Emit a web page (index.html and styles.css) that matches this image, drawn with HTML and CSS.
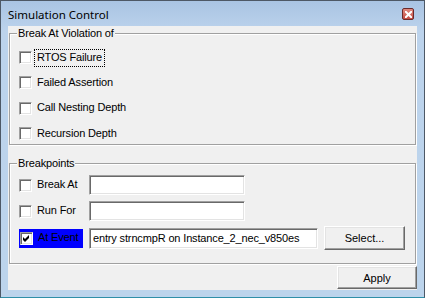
FILE: index.html
```html
<!DOCTYPE html>
<html lang="en">
<head>
  <meta charset="UTF-8" />
  <title>Simulation Control</title>
  <link rel="stylesheet" href="styles.css">
</head>
<body>
  <div class="window">
    <div class="titlebar">
      <span class="title">Simulation Control</span>
      <span class="close">
        <svg width="7" height="7" viewBox="0 0 7 7"><path d="M0 0 L7 7 M7 0 L0 7" stroke="#fff" stroke-width="2"/></svg>
      </span>
    </div>

    <div class="client">
      <div class="group group-violation">
        <div class="group-title">Break At Violation of</div>
        <div class="rows">
          <div class="row"><span class="check"></span><span class="label focused">RTOS Failure</span></div>
          <div class="row"><span class="check"></span><span class="label">Failed Assertion</span></div>
          <div class="row"><span class="check"></span><span class="label">Call Nesting Depth</span></div>
          <div class="row"><span class="check"></span><span class="label">Recursion Depth</span></div>
        </div>
      </div>

      <div class="group group-breakpoints">
        <div class="group-title">Breakpoints</div>
        <div class="rows">
          <div class="bp-row">
            <div class="bp-name"><span class="check"></span><span class="label">Break At</span></div>
            <input class="field" type="text">
          </div>
          <div class="bp-row">
            <div class="bp-name"><span class="check"></span><span class="label">Run For</span></div>
            <input class="field" type="text">
          </div>
          <div class="bp-row bp-event">
            <div class="bp-name selected">
              <span class="check checked">
                <svg width="7" height="7" viewBox="0 0 7 7"><path d="M0 2 L2 4 L6 0 L6 3 L2 7 L0 5 Z" fill="#000"/></svg>
              </span>
              <span class="label">At Event</span>
            </div>
            <input class="field field-wide" type="text" value="entry strncmpR on Instance_2_nec_v850es">
            <button class="btn btn-select">Select...</button>
          </div>
        </div>
      </div>

      <div class="footer">
        <button class="btn btn-apply">Apply</button>
      </div>
    </div>
  </div>
</body>
</html>
```

FILE: styles.css
```css
body {
  margin: 0;
  padding: 0;
  font-family: 'Liberation Sans', Arial, sans-serif;
  font-size: 11px;
  letter-spacing: -0.15px;
  color: #000;
  background: #fff;
}
.window {
  width: 425px;
  height: 298px;
  box-sizing: border-box;
  border: 1px solid #4d5866;
  border-bottom-color: #2f8fa8;
  padding: 0 7px 7px 7px;
  background: linear-gradient(to bottom, #a9c4e3, #bcd3ec 30px, #bcd4ec);
}
.titlebar {
  height: 25px;
  display: flex;
  align-items: center;
  justify-content: space-between;
  margin: 0 -7px;
  padding: 0 10px 0 7px;
}
.title {
  font-family: 'Noto Sans', sans-serif;
  font-size: 11.5px;
  letter-spacing: 0;
  color: #000;
  padding-top: 1px;
}
.close {
  width: 12px;
  height: 12px;
  box-sizing: border-box;
  border: 1px solid #6b2a2a;
  border-radius: 2px;
  background: linear-gradient(to bottom, #e08a80, #c44d44);
  display: flex;
  align-items: center;
  justify-content: center;
  margin-top: 1px;
}
.close svg {
  display: block;
}
.client {
  height: 264px;
  background: #f0f0f0;
  display: flex;
  flex-direction: column;
}
.group {
  margin-left: 1px;
  width: 407px;
  box-sizing: border-box;
  border: 1px solid #a0a0a0;
  box-shadow: 1px 1px 0 #fff, inset 1px 1px 0 #fff;
  padding-left: 9px;
}
.group-violation {
  margin-top: 7px;
  height: 112px;
}
.group-breakpoints {
  margin-top: 18px;
  height: 101px;
}
.group-title {
  display: block;
  width: fit-content;
  background: #f0f0f0;
  height: 13px;
  line-height: 13px;
  padding: 0 1px;
  margin: -7px 0 0 -2px;
}
.rows {
  padding-top: 5px;
}
.group-breakpoints .rows {
  padding-top: 4px;
}
.row {
  height: 25.34px;
  display: flex;
  align-items: center;
}
.check {
  width: 13px;
  height: 13px;
  box-sizing: border-box;
  border: 1px solid;
  border-color: #a0a0a0 #fff #fff #a0a0a0;
  box-shadow: inset 1px 1px 0 #696969, inset -1px -1px 0 #e3e3e3;
  background: #fff;
  display: flex;
  align-items: center;
  justify-content: center;
  flex: none;
}
.check svg {
  display: block;
}
.label {
  margin-left: 2px;
  padding: 1px 2px 2px 2px;
  border: 1px dotted transparent;
  line-height: 13px;
  white-space: nowrap;
}
.label.focused {
  border-color: #000;
}
.bp-row {
  display: flex;
  align-items: center;
  height: 22px;
  margin-bottom: 4px;
}
.bp-event {
  height: 24px;
  margin-top: 2px;
}
.bp-name {
  width: 70px;
  display: flex;
  align-items: center;
  flex: none;
}
.bp-name.selected {
  background: #0000ff;
  width: 64px;
  height: 19px;
  padding-left: 1px;
  margin-right: 6px;
  box-sizing: border-box;
}
.field {
  width: 156px;
  height: 20px;
  box-sizing: border-box;
  border: 1px solid;
  border-color: #a0a0a0 #fff #fff #a0a0a0;
  box-shadow: inset 1px 1px 0 #696969, inset -1px -1px 0 #e3e3e3;
  background: #fff;
  font-family: inherit;
  font-size: 11px;
  letter-spacing: -0.15px;
  padding: 0 0 0 3px;
  margin: 0;
  outline: none;
}
.field-wide {
  width: 229px;
  height: 21px;
}
.btn {
  box-sizing: border-box;
  font-family: inherit;
  font-size: 11px;
  color: #000;
  background: #f0f0f0;
  border: 1px solid;
  border-color: #fff #696969 #696969 #fff;
  box-shadow: inset -1px -1px 0 #a0a0a0, inset 1px 1px 0 #e3e3e3;
  padding: 0;
  margin: 0;
}
.btn-select {
  width: 81px;
  height: 24px;
  margin-left: 6px;
}
.footer {
  display: flex;
  justify-content: flex-end;
  margin-top: 2px;
}
.btn-apply {
  width: 80px;
  height: 23px;
}
```
